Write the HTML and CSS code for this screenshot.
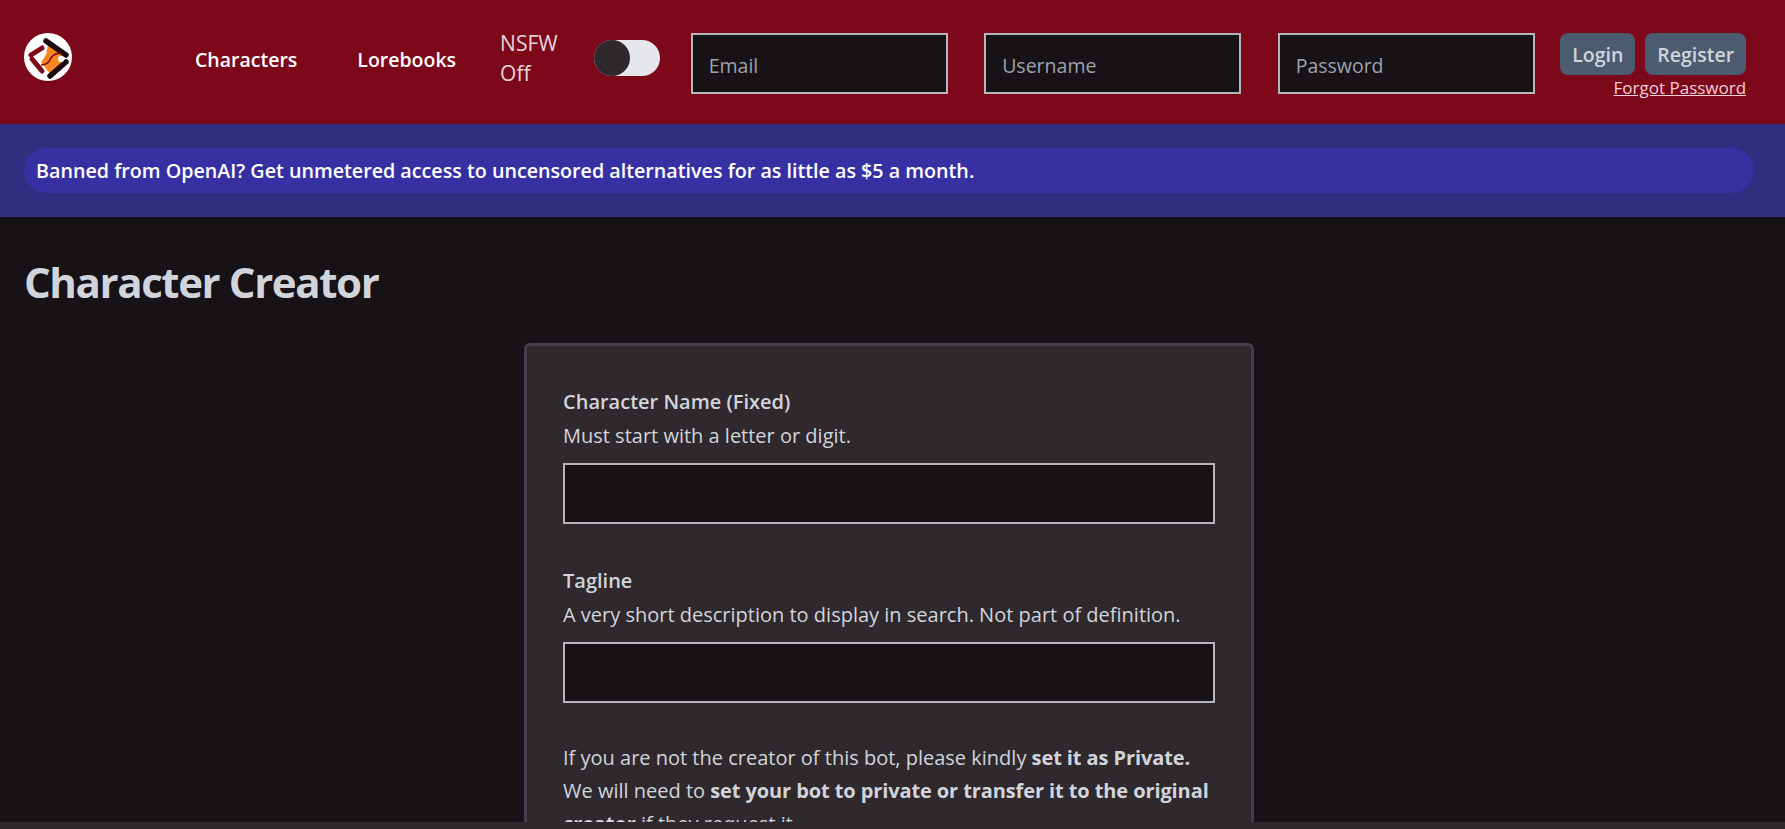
FILE: index.html
```html
<!DOCTYPE html>
<html lang="en">

<head>
    <meta charset="UTF-8">
    <meta name="viewport" content="width=device-width, initial-scale=1.0">
    <title>Character Creator</title>
    <link rel="stylesheet" href="styles.css">
</head>

<body>
    <header class="topbar">
        <svg class="logo" viewBox="0 0 48 48" aria-label="Logo">
            <circle cx="24" cy="24" r="24" fill="#fff" />
            <path d="M24 12 L38 20 L39 27 L33 37 L26 41 L17 29 L22 22 Z" fill="#f5871f" />
            <path d="M22 8 L42 22" stroke="#1c0a10" stroke-width="5.5" stroke-linecap="round" fill="none" />
            <path d="M42 29 L26 43" stroke="#1c0a10" stroke-width="5.5" stroke-linecap="round" fill="none" />
            <path d="M18 15 L7 22" stroke="#7d0819" stroke-width="5" stroke-linecap="round" fill="none" />
            <path d="M8 26 L18 38" stroke="#7d0819" stroke-width="5" stroke-linecap="round" fill="none" />
            <path d="M17 32 Q24 32 27 25 Q30 20 38 20" stroke="#7d0819" stroke-width="1.6" fill="none" />
            <circle cx="37" cy="26" r="3" fill="#fff" />
        </svg>
        <nav class="nav-links">
            <a href="#">Characters</a>
            <a href="#">Lorebooks</a>
        </nav>
        <div class="nsfw">
            <span>NSFW<br>Off</span>
            <span class="toggle"><span class="knob"></span></span>
        </div>
        <form class="login-form">
            <input type="text" placeholder="Email">
            <input type="text" placeholder="Username">
            <input type="password" placeholder="Password">
            <div class="login-actions">
                <div class="login-buttons">
                    <button type="button">Login</button>
                    <button type="button">Register</button>
                </div>
                <a href="#" class="forgot">Forgot Password</a>
            </div>
        </form>
    </header>

    <div class="promo">
        <div class="promo-pill">Banned from OpenAI? Get unmetered access to uncensored alternatives for as little as $5 a month.</div>
    </div>

    <main class="content">
        <h1>Character Creator</h1>
        <section class="card">
            <div class="field">
                <label>Character Name (Fixed)</label>
                <p>Must start with a letter or digit.</p>
                <input type="text">
            </div>
            <div class="field">
                <label>Tagline</label>
                <p>A very short description to display in search. Not part of definition.</p>
                <input type="text">
            </div>
            <p class="note">If you are not the creator of this bot, please kindly <b>set it as Private.</b> We will need to <b>set your bot to private or transfer it to the original creator</b> if they request it.</p>
        </section>
    </main>

    <div class="scroll-track"></div>
</body>

</html>
```

FILE: styles.css
```css
* {
    box-sizing: border-box;
}

html,
body {
    height: 829px;
    overflow: hidden;
}

body {
    margin: 0;
    background: #161216;
    color: #d1d5db;
    font-family: 'Open Sans', sans-serif;
    font-size: 20px;
}

.topbar {
    display: flex;
    align-items: center;
    height: 124px;
    padding: 0 38px 0 24px;
    background: #7d0819;
}

.logo {
    width: 48px;
    height: 48px;
    margin-top: -10px;
    flex: none;
}

.nav-links {
    display: flex;
    gap: 60px;
    margin-left: 123px;
    margin-top: -6px;
}

.nav-links a {
    color: #fff;
    font-size: 19.5px;
    font-weight: 600;
    text-decoration: none;
}

.nsfw {
    display: flex;
    align-items: center;
    gap: 36px;
    margin-left: 44px;
    color: #e5d5da;
    font-size: 21px;
    font-weight: 500;
    line-height: 30px;
    margin-top: -8px;
}

.toggle {
    display: block;
    width: 66px;
    height: 36px;
    border-radius: 18px;
    background: #e5e7eb;
}

.knob {
    display: block;
    width: 36px;
    height: 36px;
    border-radius: 50%;
    background: #2f282d;
}

.login-form {
    display: flex;
    align-items: flex-start;
    gap: 36.5px;
    margin-left: 31px;
    margin-top: 4px;
    height: 62px;
}

input {
    height: 61px;
    padding: 0 16px;
    border: 2px solid #b4b6ba;
    border-radius: 0;
    background: #161216;
    color: #d1d5db;
    font-family: inherit;
    font-size: 19.5px;
}

input::placeholder {
    color: #9ca3af;
}

.login-form input {
    width: 257px;
    padding-top: 3px;
}

.login-actions {
    display: flex;
    flex-direction: column;
    align-items: flex-end;
    margin-left: -11px;
}

.login-buttons {
    display: flex;
    gap: 10px;
}

.login-buttons button {
    height: 42px;
    padding: 0 12px;
    border: none;
    border-radius: 8px;
    background: #4b5b70;
    color: #d1d5db;
    font-family: inherit;
    font-size: 19.5px;
    font-weight: 600;
}

.forgot {
    margin-top: 1px;
    color: #f3d0da;
    font-size: 17px;
    line-height: 24px;
}

.promo {
    height: 93px;
    padding: 24px 31px 0 24px;
    background: #312e81;
}

.promo-pill {
    height: 45px;
    padding: 0 12px;
    border-radius: 23px;
    background: #3730a3;
    color: #fff;
    font-size: 19.7px;
    font-weight: 600;
    line-height: 46px;
}

.content {
    padding: 0 31px 0 24px;
}

h1 {
    margin: 38px 0 34px;
    font-size: 42px;
    line-height: 54px;
    font-weight: 700;
    letter-spacing: -1.4px;
}

.card {
    width: 730px;
    margin: 0 auto;
    padding: 39px 36px;
    border: 3px solid #42404c;
    border-bottom: none;
    border-radius: 6px 6px 0 0;
    background: #2f282d;
    line-height: 33px;
}

.field {
    margin-bottom: 40px;
}

.field label {
    display: block;
    font-weight: 600;
}

.field p {
    margin: 1px 0 11px;
}

.field input {
    display: block;
    width: 100%;
}

.note {
    margin: -2px 0 0;
}

.note b {
    letter-spacing: -0.1px;
}

.scroll-track {
    position: fixed;
    left: 0;
    right: 0;
    bottom: 0;
    height: 7px;
    background: #2f282d;
}
```
